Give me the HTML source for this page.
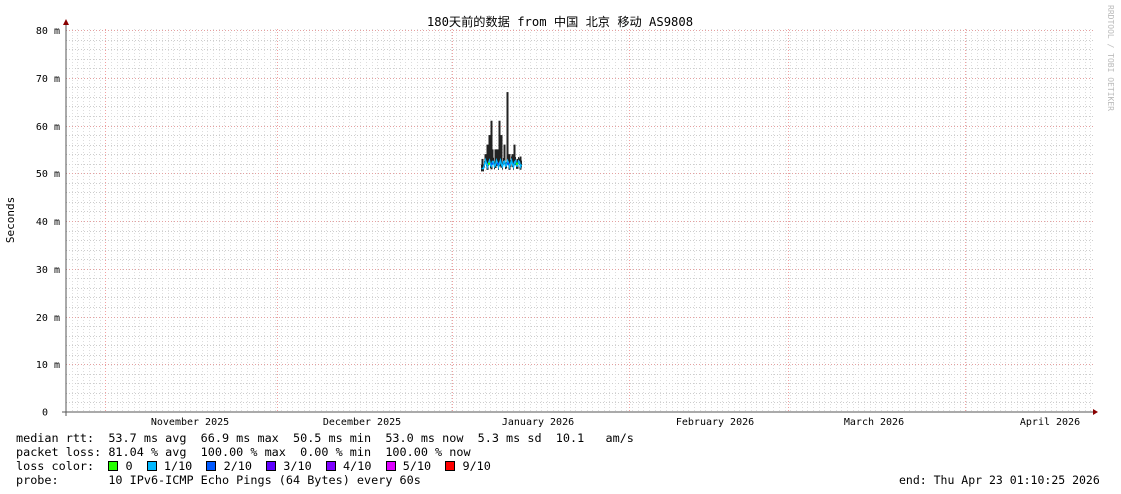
<!DOCTYPE html>
<html><head><meta charset="utf-8"><style>
html,body{margin:0;padding:0;background:#fff;width:1121px;height:494px;overflow:hidden;font-family:"DejaVu Sans Mono","Liberation Mono","Noto Sans CJK SC",monospace;}
svg{position:absolute;left:0;top:0}
.t{font-size:10px;fill:#000}
.l{position:absolute;left:16px;font-size:11.8px;white-space:pre;line-height:14px;color:#000}
.sq{display:inline-block;width:8px;height:8px;border:1px solid #000;vertical-align:-1px}
</style></head><body>
<svg id="g" width="1121" height="494" xmlns="http://www.w3.org/2000/svg">
<g id="grid"></g>
<text x="560" y="26" text-anchor="middle" style="font-family:'DejaVu Sans Mono','Noto Sans CJK SC',monospace;font-size:12.2px">180天前的数据 from 中国 北京 移动 AS9808</text>
<text transform="translate(14,220) rotate(-90)" text-anchor="middle" class="t" style="font-size:11px">Seconds</text>
<text transform="translate(1108,5) rotate(90)" style="font-size:8px;fill:#bbb;font-family:'DejaVu Sans Mono',monospace">RRDTOOL / TOBI OETIKER</text>
<g id="data"></g>
<line x1="66" y1="24" x2="66" y2="416" stroke="#555"/>
<line x1="62" y1="412" x2="1095" y2="412" stroke="#555"/>
<polygon points="63,25 69,25 66,19" fill="#800"/>
<polygon points="1093,409 1093,415 1098,412" fill="#800"/>
</svg>
<div class="l" style="top:431px">median rtt:  53.7 ms avg  66.9 ms max  50.5 ms min  53.0 ms now  5.3 ms sd  10.1   am/s</div>
<div class="l" style="top:445px">packet loss: 81.04 % avg  100.00 % max  0.00 % min  100.00 % now</div>
<div class="l" style="top:459px">loss color:  <span class="sq" style="background:#26ff00"></span> 0  <span class="sq" style="background:#00b8ff"></span> 1/10  <span class="sq" style="background:#0059ff"></span> 2/10  <span class="sq" style="background:#5e00ff"></span> 3/10  <span class="sq" style="background:#7e00ff"></span> 4/10  <span class="sq" style="background:#dd00ff"></span> 5/10  <span class="sq" style="background:#ff0000"></span> 9/10</div>
<div class="l" style="top:473px">probe:       10 IPv6-ICMP Echo Pings (64 Bytes) every 60s</div>
<div class="l" style="top:473px;left:899px;font-size:11.5px">end: Thu Apr 23 01:10:25 2026</div>
<script>
(function(){
var NS="http://www.w3.org/2000/svg",G=document.getElementById('grid'),D=document.getElementById('data');
function el(p,t,a){var e=document.createElementNS(NS,t);for(var k in a)e.setAttribute(k,a[k]);p.appendChild(e);return e;}
function Y(v){return 412-v*4.775;}
for(var v=2;v<=80;v+=2){if(v%10)el(G,'line',{x1:66,x2:1093,y1:Math.round(Y(v))+.5,y2:Math.round(Y(v))+.5,stroke:'#ccc','stroke-dasharray':'1,2'});}
for(var x=105.5-5.66*7;x<1093;x+=5.66){if(x>67){var xx=Math.round(x)+.5;el(G,'line',{x1:xx,x2:xx,y1:29,y2:412,stroke:'#ddd','stroke-dasharray':'1,2'});}}
for(var v=10;v<=80;v+=10){var yy=Math.round(Y(v))+.5;el(G,'line',{x1:66,x2:1093,y1:yy,y2:yy,stroke:'#e4a0a0','stroke-dasharray':'1,2'});
el(G,'text',{x:60,y:yy+3.5,'text-anchor':'end','class':'t'}).textContent=v+' m';}
el(G,'text',{x:48,y:415.5,'text-anchor':'end','class':'t'}).textContent='0';
[105.5,277.5,452.5,629.5,788.5,965.5].forEach(function(x){el(G,'line',{x1:x,x2:x,y1:29,y2:412,stroke:'#f0a0a0','stroke-dasharray':'1,2'});});
[[190,'November 2025'],[362,'December 2025'],[538,'January 2026'],[715,'February 2026'],[874,'March 2026'],[1050,'April 2026']].forEach(function(a){el(G,'text',{x:a[0],y:425,'text-anchor':'middle','class':'t'}).textContent=a[1];});
var spikes={482:53,485:54,487:56,489:58,491:61,492:55,495:55,497:55,499:61,501:58,504:56,507:67,509:54,512:54,514:56,517:53,520:53.5};
var pts=[];
for(var x=481;x<=521;x++){var m=52+Math.sin(x*1.7)*0.7;if(x<484)m=51;var tp=spikes[x]||(m+0.8);
el(D,'line',{x1:x+.5,x2:x+.5,y1:Y(m-0.6),y2:Y(tp),stroke:'#222','stroke-width':spikes[x]?2:1});pts.push((x+.5)+','+Y(m).toFixed(1));}
el(D,'polyline',{points:pts.join(' '),fill:'none',stroke:'#00b8ff','stroke-width':1.5});
[[488,'#26ff00'],[497,'#0059ff'],[507,'#0059ff'],[516,'#26ff00'],[491,'#0059ff']].forEach(function(a){el(D,'rect',{x:a[0],y:Y(52)-1,width:2,height:2,fill:a[1]});});
})();
</script>
</body></html>
